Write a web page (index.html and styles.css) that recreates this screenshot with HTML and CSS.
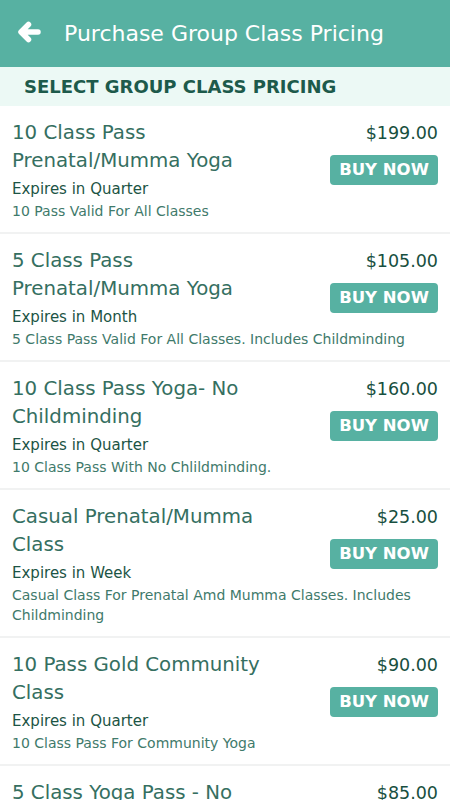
FILE: index.html
```html
<!DOCTYPE html>
<html>
<head>
<meta charset="utf-8">
<link rel="stylesheet" href="styles.css">
</head>
<body>
<header class="appbar">
  <svg class="back" width="24" height="22" viewBox="0 0 24 22" aria-hidden="true">
    <path d="M21 11 H5 M11.5 3.5 L4 11 L11.5 18.5" fill="none" stroke="#fff" stroke-width="5.5" stroke-linecap="round" stroke-linejoin="round"/>
  </svg>
  <h1 class="appbar-title">Purchase Group Class Pricing</h1>
</header>
<div class="section-head">SELECT GROUP CLASS PRICING</div>
<ul class="list">
  <li class="item">
    <div class="row">
      <div class="info">
        <div class="title">10 Class Pass Prenatal/Mumma Yoga</div>
        <div class="expires">Expires in Quarter</div>
      </div>
      <div class="buy">
        <div class="price">$199.00</div>
        <button class="btn">BUY NOW</button>
      </div>
    </div>
    <div class="desc">10 Pass Valid For All Classes</div>
  </li>
  <li class="item">
    <div class="row">
      <div class="info">
        <div class="title">5 Class Pass Prenatal/Mumma Yoga</div>
        <div class="expires">Expires in Month</div>
      </div>
      <div class="buy">
        <div class="price">$105.00</div>
        <button class="btn">BUY NOW</button>
      </div>
    </div>
    <div class="desc">5 Class Pass Valid For All Classes. Includes Childminding</div>
  </li>
  <li class="item">
    <div class="row">
      <div class="info">
        <div class="title">10 Class Pass Yoga- No Childminding</div>
        <div class="expires">Expires in Quarter</div>
      </div>
      <div class="buy">
        <div class="price">$160.00</div>
        <button class="btn">BUY NOW</button>
      </div>
    </div>
    <div class="desc">10 Class Pass With No Chlildminding.</div>
  </li>
  <li class="item">
    <div class="row">
      <div class="info">
        <div class="title">Casual Prenatal/Mumma Class</div>
        <div class="expires">Expires in Week</div>
      </div>
      <div class="buy">
        <div class="price">$25.00</div>
        <button class="btn">BUY NOW</button>
      </div>
    </div>
    <div class="desc">Casual Class For Prenatal Amd Mumma Classes. Includes Childminding</div>
  </li>
  <li class="item">
    <div class="row">
      <div class="info">
        <div class="title">10 Pass Gold Community Class</div>
        <div class="expires">Expires in Quarter</div>
      </div>
      <div class="buy">
        <div class="price">$90.00</div>
        <button class="btn">BUY NOW</button>
      </div>
    </div>
    <div class="desc">10 Class Pass For Community Yoga</div>
  </li>
  <li class="item">
    <div class="row">
      <div class="info">
        <div class="title">5 Class Yoga Pass - No Childminding</div>
        <div class="expires">Expires in Month</div>
      </div>
      <div class="buy">
        <div class="price">$85.00</div>
        <button class="btn">BUY NOW</button>
      </div>
    </div>
    <div class="desc">5 Class Yoga Pass With No Childminding</div>
  </li>
</ul>
</body>
</html>
```
FILE: styles.css
```css
* { box-sizing: border-box; }
html, body {
  margin: 0;
  padding: 0;
  background: #ffffff;
  font-family: "DejaVu Sans", "Liberation Sans", sans-serif;
}
.appbar {
  height: 67px;
  background: #57b1a2;
  display: flex;
  align-items: center;
  padding-left: 17px;
  gap: 23px;
}
.back {
  display: block;
  flex: none;
  margin-bottom: 4px;
}
.appbar-title {
  margin: 0;
  font-size: 22px;
  font-weight: normal;
  color: #ffffff;
  line-height: 28px;
}
.section-head {
  height: 39px;
  background: #ecf9f5;
  color: #1d5a4b;
  font-size: 18px;
  font-weight: bold;
  line-height: 39px;
  padding-left: 24px;
}
.list {
  list-style: none;
  margin: 0;
  padding: 0;
}
.item {
  padding: 13px 12px 11px 12px;
  border-bottom: 2px solid #f1f2f2;
}
.row {
  display: flex;
  justify-content: space-between;
  align-items: flex-start;
}
.info {
  flex: 1;
  min-width: 0;
}
.title {
  max-width: 282px;
  font-size: 19.8px;
  line-height: 28px;
  color: #356f61;
}
.expires {
  margin-top: 3px;
  font-size: 15px;
  line-height: 22px;
  color: #1c5445;
}
.buy {
  display: flex;
  flex-direction: column;
  align-items: flex-end;
  flex: none;
}
.price {
  font-size: 17.5px;
  line-height: 28px;
  color: #174f40;
}
.btn {
  margin-top: 8px;
  width: 108px;
  height: 30px;
  border: none;
  border-radius: 4px;
  background: #57b1a2;
  color: #ffffff;
  font-family: "DejaVu Sans", "Liberation Sans", sans-serif;
  font-size: 16.5px;
  font-weight: bold;
  padding: 0;
  line-height: 30px;
}
.desc {
  margin-top: 1px;
  font-size: 14px;
  line-height: 20px;
  color: #3f7a6b;
}
```
